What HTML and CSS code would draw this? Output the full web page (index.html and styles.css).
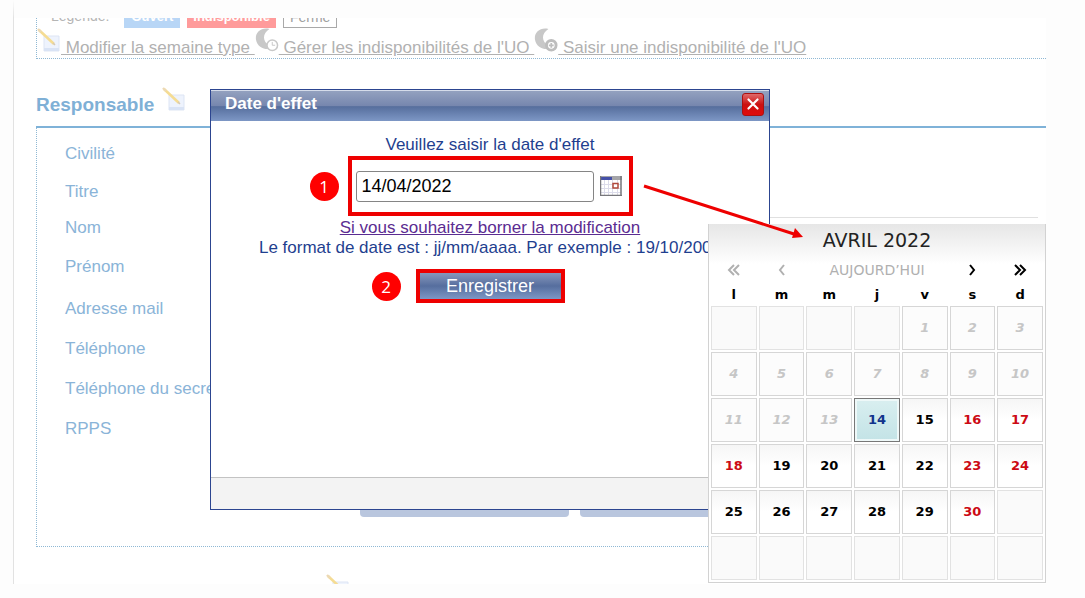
FILE: index.html
```html
<!DOCTYPE html>
<html lang="fr">
<head>
    <meta charset="UTF-8">
    <meta name="viewport" content="width=device-width, initial-scale=1.0">
    <title>Date d'effet</title>
    <link rel="stylesheet" href="styles.css">
</head>
<body>
    <!-- Shared icons -->
    <svg class="sprite" aria-hidden="true">
        <symbol id="icon-edit" viewBox="0 0 24 24">
            <path d="M7 8h15v15H7z" fill="#eef3fd" stroke="#dde5f4"/>
            <path d="M7 20h15v3H7z" fill="#d9e3f5"/>
            <path d="M2 2l15 14" stroke="#f5dc93" stroke-width="2.6"/>
            <path d="M1 1l3 3" stroke="#ecd9b4" stroke-width="2.4"/>
            <path d="M16 15l2 2" stroke="#d5c8b4" stroke-width="1.4"/>
        </symbol>
        <symbol id="icon-moon" viewBox="0 0 25 25">
            <path d="M15 1C6-1 0 5 1 12c1 7 7 10 12 10l2-4C8 15 7 6 15 1z" fill="#c8c8c8"/>
        </symbol>
    </svg>

    <main class="page">
        <section class="toolbar">
            <div class="legend">
                <span class="legend-label">Légende:</span>
                <span class="chip chip-open">Ouvert</span>
                <span class="chip chip-busy">Indisponible</span>
                <span class="chip chip-closed">Fermé</span>
            </div>
            <nav class="links">
                <svg class="icon"><use href="#icon-edit"/></svg>
                <a href="#">&nbsp;Modifier la semaine type&nbsp;</a>
                <svg class="icon" viewBox="0 0 25 25">
                    <use href="#icon-moon"/>
                    <circle cx="18" cy="18" r="5.5" fill="#fff" stroke="#c8c8c8" stroke-width="1.6"/>
                    <path d="M18 14.5V18h3" fill="none" stroke="#c8c8c8"/>
                </svg>
                <a href="#">&nbsp;Gérer les indisponibilités de l'UO&nbsp;</a>
                <svg class="icon" viewBox="0 0 25 25">
                    <use href="#icon-moon"/>
                    <circle cx="18" cy="18" r="5" fill="#fff" stroke="#bdbdbd" stroke-width="3"/>
                    <path d="M18 15.5v5M15.5 18h5" stroke="#bdbdbd" stroke-width="1.8"/>
                </svg>
                <a href="#">&nbsp;Saisir une indisponibilité de l'UO</a>
            </nav>
        </section>

        <h2 class="section-title">Responsable <svg class="icon"><use href="#icon-edit"/></svg></h2>

        <section class="details">
            <ul class="fields">
                <li>Civilité</li>
                <li>Titre</li>
                <li class="tight">Nom</li>
                <li class="wide">Prénom</li>
                <li class="tall">Adresse mail</li>
                <li class="tall">Téléphone</li>
                <li class="tall">Téléphone du secrétariat</li>
                <li class="tall">RPPS</li>
            </ul>
            <div class="side">
                <div class="side-top"></div>
                <div class="actions">
                    <button type="button" aria-label="Valider"></button>
                    <button type="button" aria-label="Annuler"></button>
                </div>
            </div>
        </section>

        <div class="next-section">
            <svg class="icon"><use href="#icon-edit"/></svg>
        </div>
    </main>

    <!-- Effective date dialog -->
    <div class="dialog" role="dialog" aria-labelledby="dialog-title">
        <header class="dialog-header">
            <h3 id="dialog-title">Date d'effet</h3>
            <button type="button" class="close-btn" aria-label="Fermer">
                <svg viewBox="0 0 22 22">
                    <path d="M6 6l10 10M16 6L6 16" stroke="#fff" stroke-width="2.4" stroke-linecap="round"/>
                </svg>
            </button>
        </header>
        <div class="dialog-body">
            <label for="effectDate">Veuillez saisir la date d'effet</label>
            <div class="highlight date-row">
                <span class="step step-date">1</span>
                <input type="text" id="effectDate" value="14/04/2022">
                <button type="button" class="calendar-btn" aria-label="Calendrier">
                    <svg viewBox="0 0 22 20">
                        <path d="M0 0h22v20H0z" fill="#fff"/>
                        <path d="M0 0h22v4H0z" fill="#a5a5a8"/>
                        <path d="M1 1h11v3H1z" fill="#4550a8"/>
                        <path d="M4.5 4v15M8.5 4v15M12.5 4v15M17.5 4v15M1 8.5h20M1 12.5h20M1 16.5h20" stroke="#dcdcea"/>
                        <path d="M.5 0v20M0 19.5h22M21 0v20" fill="none" stroke="#77777c" stroke-width="1.5"/>
                        <path d="M13 7.5h5v4.5h-5z" fill="#fff" stroke="#b0493c" stroke-width="1.5"/>
                    </svg>
                </button>
            </div>
            <a href="#" class="limit-link">Si vous souhaitez borner la modification</a>
            <p>Le format de date est : jj/mm/aaaa. Par exemple : 19/10/2006</p>
            <div class="highlight save-row">
                <span class="step step-save">2</span>
                <button type="button" class="save-btn">Enregistrer</button>
            </div>
        </div>
        <footer class="dialog-footer"></footer>
    </div>

    <!-- Date picker -->
    <div class="calendar">
        <div class="calendar-title">AVRIL 2022</div>
        <div class="calendar-nav">
            <button type="button" disabled aria-label="Année précédente"><svg viewBox="0 0 14 12"><path d="M7 1L2 6l5 5M12 1L7 6l5 5"/></svg></button>
            <button type="button" disabled aria-label="Mois précédent"><svg viewBox="0 0 14 12"><path d="M9 1L5 6l4 5"/></svg></button>
            <button type="button" disabled class="today-btn">AUJOURD’HUI</button>
            <button type="button" aria-label="Mois suivant"><svg viewBox="0 0 14 12"><path d="M5 1l4 5-4 5"/></svg></button>
            <button type="button" aria-label="Année suivante"><svg viewBox="0 0 14 12"><path d="M2 1l5 5-5 5M7 1l5 5-5 5"/></svg></button>
        </div>
        <table>
            <thead>
                <tr><th>l</th><th>m</th><th>m</th><th>j</th><th>v</th><th>s</th><th>d</th></tr>
            </thead>
            <tbody>
                <tr><td class="empty"></td><td class="empty"></td><td class="empty"></td><td class="empty"></td><td class="past">1</td><td class="past">2</td><td class="past">3</td></tr>
                <tr><td class="past">4</td><td class="past">5</td><td class="past">6</td><td class="past">7</td><td class="past">8</td><td class="past">9</td><td class="past">10</td></tr>
                <tr><td class="past">11</td><td class="past">12</td><td class="past">13</td><td class="selected">14</td><td>15</td><td class="off">16</td><td class="off">17</td></tr>
                <tr><td class="off">18</td><td>19</td><td>20</td><td>21</td><td>22</td><td class="off">23</td><td class="off">24</td></tr>
                <tr><td>25</td><td>26</td><td>27</td><td>28</td><td>29</td><td class="off">30</td><td class="empty"></td></tr>
                <tr><td class="empty"></td><td class="empty"></td><td class="empty"></td><td class="empty"></td><td class="empty"></td><td class="empty"></td><td class="empty"></td></tr>
            </tbody>
        </table>
    </div>

    <!-- Arrow from the date field to the picker -->
    <svg class="arrow" viewBox="0 0 162 56" aria-hidden="true">
        <path d="M2 3L152 51" stroke="#ee0000" stroke-width="3"/>
        <path d="M161 54l-11 1 3-10z" fill="#ee0000"/>
    </svg>
</body>
</html>
```
FILE: styles.css
```css
* {
    margin: 0;
    padding: 0;
    box-sizing: border-box;
}

body {
    position: relative;
    min-height: 100vh;
    background: #fdfdfd;
    font-family: "Liberation Sans", Arial, sans-serif;
    font-size: 17px;
    line-height: 20px;
    color: #1f3f8f;
}

button {
    border: none;
    background: none;
    font: inherit;
    color: inherit;
    cursor: pointer;
}

svg {
    display: block;
}

.sprite {
    position: absolute;
    width: 0;
    height: 0;
}

.icon {
    width: 24px;
    height: 24px;
    flex: none;
}

/* Page behind the dialog */
.page {
    margin: 0 39px 0 13px;
    border-top: 18px solid #fdfdfd;
    border-left: 1px solid #e2e2e2;
    padding-left: 22px;
    background: #fff;
}

.toolbar {
    border-left: 1px dotted #8fb8d4;
    border-bottom: 1px dotted #8fb8d4;
}

.legend {
    display: flex;
    align-items: flex-end;
    gap: 7px;
    height: 10px;
    padding-left: 14px;
    overflow: hidden;
    font-size: 14px;
    color: #b5b5b5;
}

.legend-label {
    margin-right: 8px;
    line-height: 24px;
}

.chip {
    padding: 0 6px;
    font-size: 13px;
    line-height: 22px;
    font-weight: bold;
    color: #fff;
}

.chip-open {
    padding: 0 7px;
    background: #b8d6f6;
}

.chip-busy {
    background: #ff9b9b;
}

.chip-closed {
    border: 1px solid #a9a9a9;
    font-size: 14px;
    line-height: 20px;
    font-weight: normal;
    color: #a0a0a0;
}

.links {
    display: flex;
    height: 30px;
}

.links a {
    padding-top: 10px;
    color: #b1b1b1;
    white-space: nowrap;
}

.section-title {
    display: flex;
    align-items: center;
    gap: 8px;
    height: 69px;
    padding-top: 24px;
    border-bottom: 2px solid #7fb2d8;
    font-size: 19px;
    color: #7fb0d6;
}

.section-title .icon {
    margin-bottom: 12px;
}

.details {
    display: flex;
    min-height: 419px;
    border-left: 1px dotted #8fb8d4;
    border-bottom: 1px dotted #8fb8d4;
}

.fields {
    width: 323px;
    padding: 7px 0 0 28px;
    list-style: none;
    color: #8ab4d8;
}

.fields li {
    line-height: 38px;
}

.fields .tight {
    line-height: 34px;
}

.fields .tall {
    line-height: 40px;
}

.fields .wide {
    line-height: 44px;
}

.side {
    display: flex;
    flex: 1;
    flex-direction: column;
    justify-content: space-between;
    padding: 0 8px 29px 0;
}

.side-top {
    height: 90px;
    border-bottom: 1px solid #e0e0e0;
}

.actions {
    display: flex;
    gap: 11px;
}

.actions button {
    width: 209px;
    height: 30px;
    border-radius: 4px;
    background: #b9c6de;
}

.next-section {
    height: 37px;
    padding: 27px 0 0 290px;
    overflow: hidden;
}

/* Dialog */
.dialog {
    position: absolute;
    top: 89px;
    left: 210px;
    display: flex;
    flex-direction: column;
    width: 560px;
    height: 421px;
    border: 1px solid #2c4590;
    background: #fff;
}

.dialog-header {
    display: flex;
    align-items: center;
    justify-content: space-between;
    height: 31px;
    padding: 0 5px 4px 14px;
    border-top: 1px solid #d5dcea;
    background: linear-gradient(#93a1bf 0%, #7686ae 50%, #566e9d 52%, #7d97c5 100%);
    color: #fff;
}

.dialog-header h3 {
    font-size: 17px;
}

.close-btn {
    width: 22px;
    height: 23px;
    border: 1px solid #a11;
    border-radius: 3px;
    background: linear-gradient(#e06a6a, #cc1111 50%, #e00b0b);
}

.dialog-body {
    display: flex;
    flex: 1;
    flex-direction: column;
    align-items: center;
    padding-top: 14px;
}

.dialog-body p {
    white-space: nowrap;
}

.highlight {
    position: relative;
    display: flex;
    align-items: center;
    border: 4px solid #ee0000;
}

.date-row {
    gap: 6px;
    height: 60px;
    margin: 1px 0 2px;
    padding: 0 7px 0 4px;
}

.date-row input {
    width: 238px;
    height: 31px;
    padding: 0 5px;
    border: 1px solid #858585;
    border-radius: 3px;
    font: inherit;
    font-size: 18px;
    color: #000;
}

.calendar-btn {
    width: 22px;
    height: 20px;
}

.limit-link {
    color: #5b2c91;
}

.save-row {
    margin-top: 11px;
}

.save-btn {
    width: 141px;
    height: 26px;
    background: linear-gradient(#8797bb, #566e9e 50%, #7d97c5);
    font-size: 18px;
    color: #fff;
}

.step {
    position: absolute;
    width: 29px;
    height: 29px;
    border-radius: 50%;
    background: #ff0000;
    font-family: "Open Sans", sans-serif;
    line-height: 29px;
    text-align: center;
    color: #fff;
}

.step-date {
    left: -42px;
}

.step-save {
    left: -48px;
}

.dialog-footer {
    height: 32px;
    border-top: 1px solid #c3c3c3;
    background: #f3f3f3;
}

/* Date picker */
.calendar {
    position: absolute;
    top: 224px;
    left: 708px;
    width: 338px;
    border: 1px solid #d2d2d2;
    border-top: none;
    background: linear-gradient(#e6e6e6, #fff 40px);
    font-family: Verdana, "DejaVu Sans", sans-serif;
    font-size: 13px;
    color: #000;
}

.calendar-title {
    height: 32px;
    font-size: 19px;
    line-height: 32px;
    text-align: center;
    color: #222;
}

.calendar-nav {
    display: grid;
    grid-template-columns: 1fr 1fr 3fr 1fr 1fr;
    align-items: center;
    height: 28px;
    padding: 0 1px;
}

.calendar-nav button {
    display: flex;
    justify-content: center;
}

.calendar-nav svg {
    width: 14px;
    height: 12px;
    fill: none;
    stroke: #000;
    stroke-width: 2;
}

.calendar-nav button:disabled {
    color: #b0b0b0;
}

.calendar-nav .today-btn {
    font-size: 14px;
}

.calendar-nav button:disabled svg {
    stroke: #b0b0b0;
}

.calendar table {
    width: 100%;
    border-spacing: 2px;
    table-layout: fixed;
    text-align: center;
}

.calendar th {
    height: 18px;
    line-height: 16px;
}

.calendar td {
    height: 44px;
    border: 1px solid #d6d6d6;
    background: linear-gradient(#f6f6f6, #fff 50%);
    font-weight: bold;
}

.calendar tbody {
    background: #f3f3f3;
}

.calendar .empty {
    border-color: #e2e2e2;
    background: #fafafa;
}

.calendar .past {
    background: #fcfcfc;
    font-style: italic;
    color: #c6c6c6;
}

.calendar .off {
    color: #cc0a14;
}

.calendar .selected {
    border-color: #777;
    background: linear-gradient(#d9eff0, #c3e3e6);
    box-shadow: inset 0 0 0 2px #eef8f8;
    color: #12338c;
}

.arrow {
    position: absolute;
    top: 183px;
    left: 642px;
    width: 162px;
    height: 56px;
}
```
